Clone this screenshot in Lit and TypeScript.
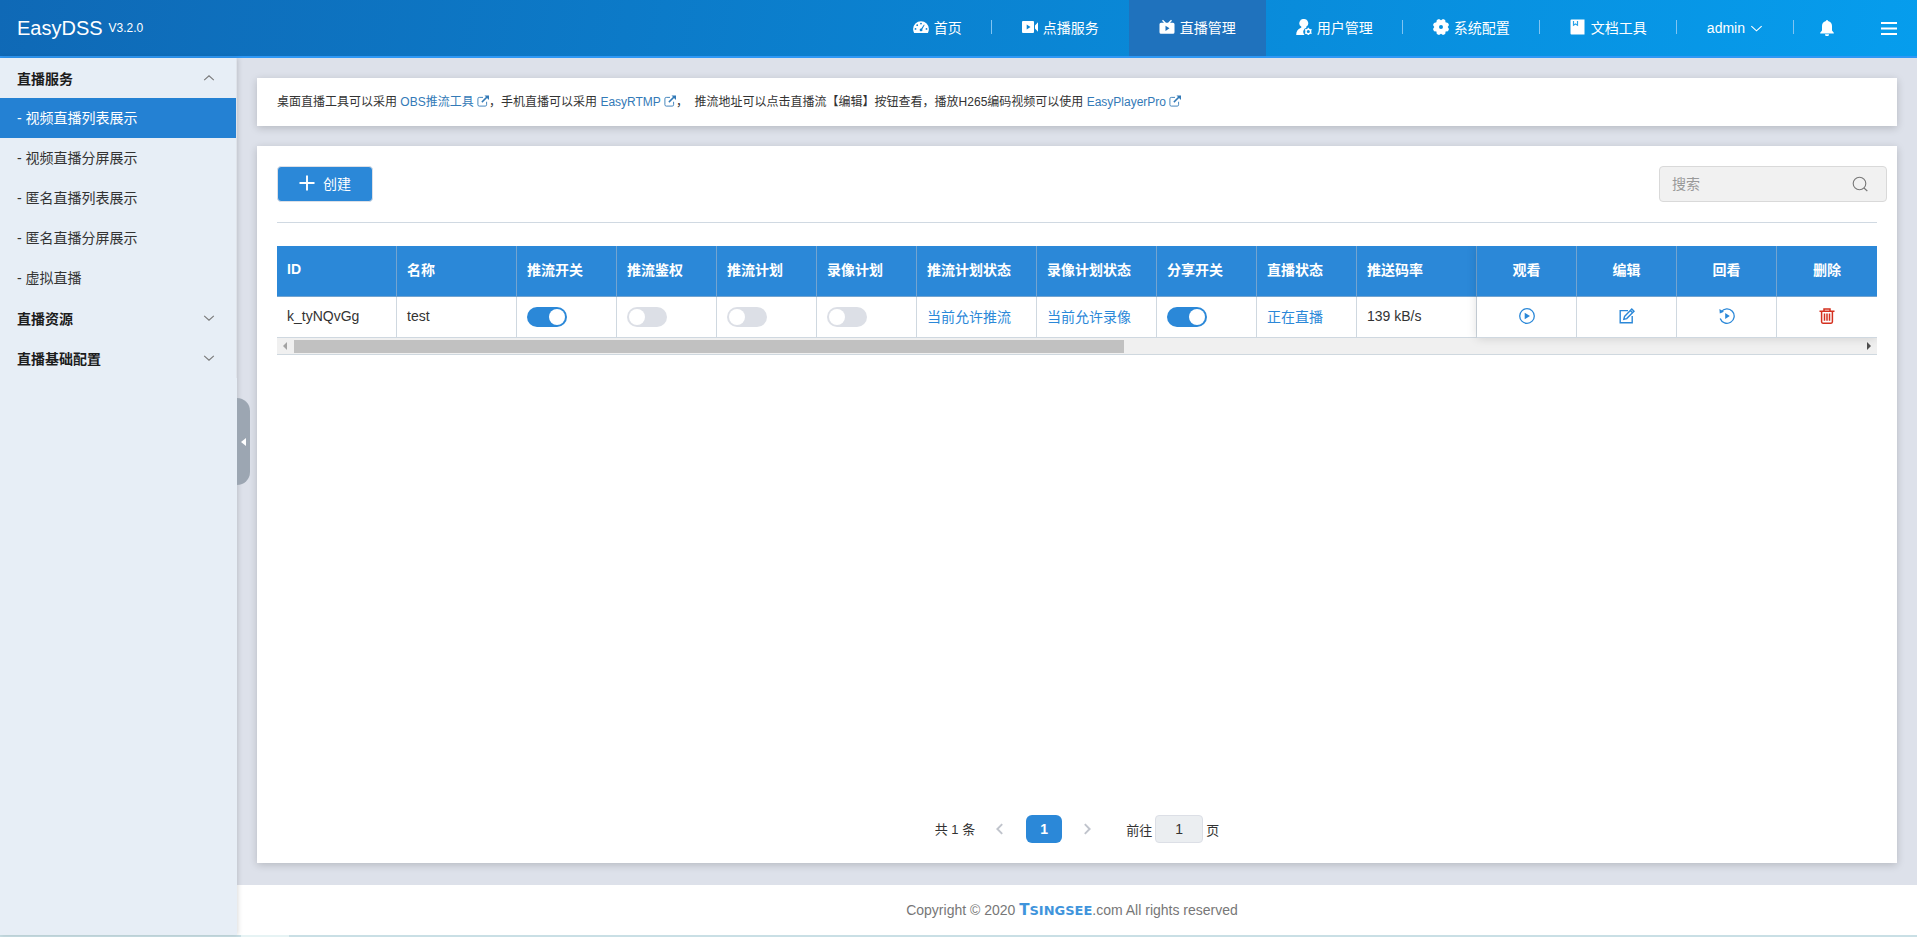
import { LitElement, html, css, svg, nothing } from "lit";
import { customElement, state } from "lit/decorators.js";

const icons: Record<string, unknown> = {
  dashboard: svg`<path fill-rule="evenodd" d="M8 2.200A7.900 7.900 0 0 0 .1 10.100c0 1.500.4 2.800 1 3.900h13.800c.6-1.100 1-2.400 1-3.900A7.900 7.900 0 0 0 8 2.200ZM8 3.700a.9.9 0 1 1 0 1.800.9.9 0 0 1 0-1.800ZM4.200 5.300a.9.9 0 1 1 0 1.800.9.9 0 0 1 0-1.800ZM2.500 9a.9.9 0 1 1 0 1.800.9.9 0 0 1 0-1.800Zm11 0a.9.9 0 1 1 0 1.800.9.9 0 0 1 0-1.800ZM11 5.500l.6.5-2.300 4.200a1.400 1.400 0 1 1-1-.7Z"/>`,
  video: svg`<path fill-rule="evenodd" d="M1 2h10a1 1 0 0 1 1 1v10a1 1 0 0 1-1 1H1a1 1 0 0 1-1-1V3a1 1 0 0 1 1-1Zm3.700 3.500v5L8.500 8ZM13 6.500 16 3.200v9.600L13 9.500Z"/>`,
  tv: svg`<path fill-rule="evenodd" d="m4 .8 3 3h2l3-3 1 1-2 2h3a1.500 1.500 0 0 1 1.500 1.500v8a1.500 1.500 0 0 1-1.500 1.500H2A1.500 1.500 0 0 1 .5 13.300v-8A1.500 1.500 0 0 1 2 3.800h3l-2-2Zm2.500 5.900v5.200l4-2.600Z"/>`,
  user: svg`<path d="M8 0a4.200 4.200 0 0 1 2.500 7.600c-.4.300-.5.900 0 1.100A4.300 4.300 0 0 0 8.600 16H.2c0-3.500 1.500-5.700 4.700-7.200.6-.3.700-.8.200-1.200A4.200 4.200 0 0 1 8 0Z"/><circle cx="12.300" cy="12.500" r="2.300" fill="none" stroke="currentColor" stroke-width="1.500"/><path d="M12.300 8.700v1.500m0 4.600v1.200m-3.300-5.400 1.200.7m4.200 2.400 1.200.7m0-3.800-1.200.7m-4.200 2.400-1.200.7" stroke="currentColor" stroke-width="1.200"/>`,
  gear: svg`<path fill-rule="evenodd" d="m6 0 2 1.200L10 0l2.200 1 .3 2.300 2.500.6 1 2.200L14.700 8 16 10l-1 2.200-2.400.4-.4 2.400-2.200 1-2-1.200L6 16l-2.200-1-.4-2.400L1 12.200 0 10l1.300-2L0 6.100l1-2.200 2.400-.6L3.800 1ZM8 6a2 2 0 1 0 0 4 2 2 0 0 0 0-4Z"/>`,
  book: svg`<path d="M1.500.5h13v15h-13a1 1 0 0 1-1-1v-13a1 1 0 0 1 1-1Z"/><path d="M3.500 2v4.200l2-1.200 2 1.200V2" fill="none" stroke="#2aa3e8" stroke-width="1.200"/>`,
  bell: svg`<path d="M8 0a1 1 0 0 1 1 1c2.600.6 4 2.500 4 5v4.500l1.800 2.200v.8H1.200v-.8L3 10.500V6c0-2.500 1.400-4.400 4-5a1 1 0 0 1 1-1ZM6 14.300h4a2 2 0 0 1-4 0Z"/>`,
  menu: svg`<path d="M0 3h16M0 8.500h16M0 14h16" fill="none" stroke="currentColor" stroke-width="1.800"/>`,
  down: svg`<path d="m2.500 5.500 5.500 5 5.500-5" fill="none" stroke="currentColor" stroke-width="1.200"/>`,
  up: svg`<path d="m2.500 10.500 5.500-5 5.500 5" fill="none" stroke="currentColor" stroke-width="1.200"/>`,
  left: svg`<path d="M10.500 2.500 5 8l5.500 5.500" fill="none" stroke="currentColor" stroke-width="2.200"/>`,
  right: svg`<path d="M5.500 2.500 11 8l-5.500 5.500" fill="none" stroke="currentColor" stroke-width="2.200"/>`,
  plus: svg`<path d="M8 .5v15M.5 8h15" fill="none" stroke="currentColor" stroke-width="1.900"/>`,
  search: svg`<g fill="none" stroke="currentColor" stroke-width="1.100"><circle cx="7.500" cy="7.500" r="6.300"/><path d="m12 12 3.300 3"/></g>`,
  external: svg`<g fill="none" stroke="currentColor" stroke-width="1.200"><path d="M8 3.200H3A1.800 1.800 0 0 0 1.200 5v8A1.800 1.800 0 0 0 3 14.800h8a1.800 1.800 0 0 0 1.800-1.800V9"/><path d="m6.500 9.500 7-7" stroke-width="2"/></g><path d="M10 .8h6v6Z"/>`,
  play: svg`<circle cx="8" cy="8" r="7.300" fill="none" stroke="currentColor" stroke-width="1.300"/><path d="M5.700 4.800v6.400L11 8Z"/>`,
  edit: svg`<g fill="none" stroke="currentColor" stroke-width="1.400"><path d="M9 2.600H1.200v12.200h12V8"/><path d="m5.500 8.600 7.300-7.500 2.200 2.100-7.300 7.400-2.900.7ZM11.300 2.600l2.200 2.100"/></g>`,
  replay: svg`<path d="M2.200 3.800A7.200 7.200 0 1 1 1.200 10.500" fill="none" stroke="currentColor" stroke-width="1.300"/><path d="m.4.900.4 4.700L5 3.800ZM6.200 5v6l4.600-3Z"/>`,
  trash: svg`<path d="M.5 3.300h15M5 3V.9h6V3M2.600 3.300v10.500c0 .9.500 1.400 1.300 1.400h8.200c.8 0 1.300-.5 1.300-1.400V3.300M5.500 5.600v7.200M8 5.600v7.200m2.500-7.200v7.200" fill="none" stroke="currentColor" stroke-width="1.500"/>`,
};

const icon = (name: string, size = "") =>
  html`<svg class="icon ${size}" viewBox="0 0 16 16" fill="currentColor" aria-hidden="true">${icons[name]}</svg>`;

interface Column {
  label: string;
  width: number;
  center?: boolean;
}

const columns: Column[] = [
  { label: "ID", width: 120 },
  { label: "名称", width: 120 },
  { label: "推流开关", width: 100 },
  { label: "推流鉴权", width: 100 },
  { label: "推流计划", width: 100 },
  { label: "录像计划", width: 100 },
  { label: "推流计划状态", width: 120 },
  { label: "录像计划状态", width: 120 },
  { label: "分享开关", width: 100 },
  { label: "直播状态", width: 100 },
  { label: "推送码率", width: 120 },
  { label: "观看", width: 100, center: true },
  { label: "编辑", width: 100, center: true },
  { label: "回看", width: 100, center: true },
  { label: "删除", width: 100, center: true },
];
const totalWidth = columns.reduce((sum, c) => sum + c.width, 0);

const base = css`
  * { box-sizing: border-box; }
  a { text-decoration: none; color: inherit; }
  button, input { font: inherit; color: inherit; margin: 0; }
  button { border: 0; padding: 0; background: none; cursor: pointer; }
  .icon { width: 16px; height: 16px; flex: none; display: block; }
  .icon.sm { width: 12px; height: 12px; }
`;

@customElement("top-bar")
export class TopBar extends LitElement {
  static styles = [base, css`
    :host { display: block; }
    header {
      display: flex; align-items: stretch; justify-content: space-between;
      height: 58px; border-bottom: 2px solid #2f98f5; color: #fff;
      background: linear-gradient(100deg, #0f69b6, #069ded);
    }
    .brand { display: flex; align-items: center; gap: 6px; padding-left: 17px; font-size: 20px; }
    .version { font-size: 12px; }
    nav { display: flex; }
    .item {
      display: flex; align-items: center; gap: 5px; padding: 0 30px 2px;
      position: relative; font-size: 14px; white-space: nowrap;
    }
    .item.active { background: #1f72bd; }
    .sep::after {
      content: ""; position: absolute; right: 0; top: 20px;
      width: 1px; height: 14px; background: #80c4f2;
    }
    .item.admin { gap: 4px; padding-bottom: 0; }
    .admin .icon { width: 15px; height: 15px; }
    .tool { padding: 0 20px; }
    .tool.bell { padding: 0 26px 0 25px; }
  `];

  render() {
    return html`
      <header>
        <div class="brand">EasyDSS <span class="version">V3.2.0</span></div>
        <nav>
          <a class="item sep" href="#home">${icon("dashboard")}首页</a>
          <a class="item" href="#vod">${icon("video")}点播服务</a>
          <a class="item active" href="#live">${icon("tv")}直播管理</a>
          <a class="item sep" href="#users">${icon("user")}用户管理</a>
          <a class="item sep" href="#config">${icon("gear")}系统配置</a>
          <a class="item sep" href="#docs">${icon("book")}文档工具</a>
          <button class="item sep admin">admin ${icon("down")}</button>
          <button class="item tool bell" aria-label="通知">${icon("bell")}</button>
          <button class="item tool" aria-label="菜单">${icon("menu")}</button>
        </nav>
      </header>
    `;
  }
}

@customElement("side-menu")
export class SideMenu extends LitElement {
  @state() private open = "直播服务";

  private groups = [
    { label: "直播服务", items: ["视频直播列表展示", "视频直播分屏展示", "匿名直播列表展示", "匿名直播分屏展示", "虚拟直播"] },
    { label: "直播资源", items: [] },
    { label: "直播基础配置", items: [] },
  ];

  static styles = [base, css`
    :host {
      display: block; flex: none; width: 237px; background: #e7eef6; position: relative; z-index: 1;
      box-shadow: 1px 0 5px rgba(0, 0, 0, 0.15);
      font-size: 14px; color: #333;
    }
    nav { border-right: 1px solid #dfe3ea; }
    .group {
      display: flex; align-items: center; justify-content: space-between;
      width: 100%; height: 40px; padding: 0 20px 0 17px; font-weight: 700; color: #1c1c1c;
    }
    .group .icon { width: 14px; height: 14px; color: #777; }
    .entry { display: flex; align-items: center; height: 40px; padding: 0 0 2px 17px; white-space: pre; }
    .entry.active { background: #2481d3; color: #fff; }
    .handle {
      position: absolute; left: 100%; top: 340px; width: 13px; height: 87px;
      display: flex; align-items: center; justify-content: center;
      background: #9ca6b2; border-radius: 0 13px 13px 0;
    }
    .arrow { border: 4px solid transparent; border-left: 0; border-right: 5px solid #fff; }
  `];

  render() {
    return html`
      <nav>
        ${this.groups.map((g) => html`
          <button class="group" @click=${() => (this.open = this.open === g.label ? "" : g.label)}>
            ${g.label}${icon(this.open === g.label ? "up" : "down")}
          </button>
          ${this.open === g.label
            ? g.items.map((t, i) => html`<a class="entry ${i === 0 ? "active" : ""}" href="#${i}">- ${t}</a>`)
            : nothing}
        `)}
      </nav>
      <button class="handle" aria-label="收起"><span class="arrow"></span></button>
    `;
  }
}

@customElement("stream-table")
export class StreamTable extends LitElement {
  static styles = [base, css`
    :host { display: block; font-size: 14px; }
    .wrap { position: relative; overflow: hidden; border-bottom: 1px solid #cfd8df; }
    table { width: 100%; table-layout: fixed; border-collapse: separate; border-spacing: 0; }
    th, td { padding: 0 10px 2px; text-align: left; border-right: 1px solid #cfd8e0; border-bottom: 1px solid #cfd8e0; white-space: nowrap; }
    th { height: 51px; padding-bottom: 4px; background: #2b88d8; color: #fff; font-weight: 700; border-color: #73a4d0; }
    td { height: 41px; color: #333; }
    th:last-child, td:last-child { border-right: 0; }
    .center { text-align: center; }
    .status { color: #2b88d8; }
    .switch {
      appearance: none; display: block; width: 40px; height: 20px; padding: 2px; margin-top: 2px;
      border-radius: 10px; background: #dcdfe6; cursor: pointer;
    }
    .switch::before { content: ""; display: block; width: 16px; height: 16px; border-radius: 8px; background: #fff; }
    .switch:checked { background: #2b88d8; }
    .switch:checked::before { margin-left: auto; }
    .action { display: block; margin: 0 auto; color: #2b88d8; }
    .danger { color: #d4301f; }
    .pinned {
      position: absolute; top: 0; right: 0; width: 25%; height: 92px;
      box-shadow: 0 0 10px rgba(0, 0, 0, 0.15); pointer-events: none;
    }
    .scroll { display: flex; align-items: center; height: 16px; padding: 0 6px; background: #f0f0f0; }
    .prev, .next { flex: none; border: 4px solid transparent; }
    .prev { border-left: 0; border-right-color: #a3a3a3; }
    .next { border-right: 0; border-left-color: #505050; }
    .track { flex: 1; margin: 0 7px; }
    .thumb { width: 53%; height: 13px; margin-top: 1px; background: #c1c1c1; }
  `];

  private toggle(label: string, on: boolean) {
    return html`<input class="switch" type="checkbox" role="switch" aria-label=${label} ?checked=${on} />`;
  }

  private action(name: string, label: string, danger = false) {
    return html`<button class="action ${danger ? "danger" : ""}" aria-label=${label}>${icon(name)}</button>`;
  }

  render() {
    const cells = [
      "k_tyNQvGg",
      "test",
      this.toggle("推流开关", true),
      this.toggle("推流鉴权", false),
      this.toggle("推流计划", false),
      this.toggle("录像计划", false),
      html`<span class="status">当前允许推流</span>`,
      html`<span class="status">当前允许录像</span>`,
      this.toggle("分享开关", true),
      html`<span class="status">正在直播</span>`,
      "139 kB/s",
      this.action("play", "观看"),
      this.action("edit", "编辑"),
      this.action("replay", "回看"),
      this.action("trash", "删除", true),
    ];
    return html`
      <div class="wrap">
        <table>
          <colgroup>
            ${columns.map((c) => html`<col style="width:${(c.width / totalWidth) * 100}%" />`)}
          </colgroup>
          <thead>
            <tr>${columns.map((c) => html`<th class=${c.center ? "center" : ""}>${c.label}</th>`)}</tr>
          </thead>
          <tbody>
            <tr>${cells.map((c, i) => html`<td class=${columns[i].center ? "center" : ""}>${c}</td>`)}</tr>
          </tbody>
        </table>
        <div class="scroll">
          <span class="prev"></span>
          <div class="track"><div class="thumb"></div></div>
          <span class="next"></span>
        </div>
        <div class="pinned"></div>
      </div>
    `;
  }
}

@customElement("app-root")
export class AppRoot extends LitElement {
  static styles = [base, css`
    :host {
      display: flex; flex-direction: column; min-height: 100vh; color: #333; background: #dde1ea;
      font-family: "Liberation Sans", "Noto Sans CJK SC", sans-serif; font-size: 14px;
    }
    .body { flex: 1; display: flex; }
    main { flex: 1; min-width: 0; display: flex; flex-direction: column; }
    .content { flex: 1; display: flex; flex-direction: column; gap: 20px; padding: 20px 20px 22px; }
    .card { background: #fff; box-shadow: 0 2px 8px rgba(0, 0, 0, 0.18); }
    .notice { padding: 15px 20px; font-size: 12px; line-height: 18px; }
    .notice a { color: #337ab7; }
    .notice .icon { display: inline-block; vertical-align: -1px; }
    .list { flex: 1; display: flex; flex-direction: column; padding: 20px; }
    .toolbar { display: flex; justify-content: space-between; padding-bottom: 20px; border-bottom: 1px solid #d0d9e2; margin-bottom: 23px; }
    .create {
      display: flex; align-items: center; gap: 8px; height: 36px; padding: 0 21px 2px;
      border: 1px solid #dcdfe6; border-radius: 4px; background: #2b88d8; color: #fff;
    }
    .search {
      display: flex; align-items: center; width: 228px; height: 36px; padding: 0 18px 0 12px; margin-right: -10px;
      border: 1px solid #d9d9d9; border-radius: 4px; background: #f1f1f1; color: #777;
    }
    .search input { flex: 1; min-width: 0; border: 0; padding: 0; background: none; outline: 0; }
    .search input::placeholder { color: #999; opacity: 1; }
    .pager { display: flex; align-items: center; justify-content: center; margin-top: auto; height: 28px; font-size: 13px; }
    .pager .turn { color: #c0c4cc; }
    .pager .icon { width: 14px; height: 14px; }
    .prev { margin: 0 19px 0 18px; }
    .next { margin: 0 32px 0 18px; }
    .total { padding-bottom: 2px; }
    .current { width: 36px; height: 28px; border-radius: 6px; background: #2b88d8; color: #fff; font-size: 14px; font-weight: 700; }
    .jump { display: flex; align-items: center; gap: 3px; }
    .jump input {
      width: 48px; height: 28px; padding: 0; text-align: center; font-size: 14px;
      border: 1px solid #dcdfe6; border-radius: 4px; background: #ebeef1;
    }
    footer { display: flex; align-items: center; justify-content: center; height: 50px; padding-right: 10px; background: #fff; color: #777; white-space: pre; }
    .logo { color: #3f94dc; font: 700 13px "DejaVu Sans", sans-serif; }
    .logo b { font-size: 15px; }
    .progress { height: 2px; background: linear-gradient(90deg, #c9dfe5 241px, #e6f3f4 241px 289px, #c9dfe5 289px); }
  `];

  render() {
    return html`
      <top-bar></top-bar>
      <div class="body">
        <side-menu></side-menu>
        <main>
          <div class="content">
            <section class="card notice">桌面直播工具可以采用 <a href="#obs">OBS推流工具 ${icon("external", "sm")}</a>，手机直播可以采用 <a href="#rtmp">EasyRTMP ${icon("external", "sm")}</a>，&nbsp; 推流地址可以点击直播流【编辑】按钮查看，播放H265编码视频可以使用 <a href="#player">EasyPlayerPro ${icon("external", "sm")}</a></section>
            <section class="card list">
              <div class="toolbar">
                <button class="create">${icon("plus")}创建</button>
                <label class="search">
                  <input type="text" placeholder="搜索" aria-label="搜索" />
                  ${icon("search")}
                </label>
              </div>
              <stream-table></stream-table>
              <div class="pager">
                <span class="total">共 1 条</span>
                <button class="turn prev" aria-label="上一页">${icon("left")}</button>
                <button class="current">1</button>
                <button class="turn next" aria-label="下一页">${icon("right")}</button>
                <label class="jump">前往<input type="text" value="1" />页</label>
              </div>
            </section>
          </div>
          <footer>Copyright © 2020 <span class="logo"><b>T</b>SINGSEE</span>.com All rights reserved</footer>
        </main>
      </div>
      <div class="progress"></div>
    `;
  }
}
